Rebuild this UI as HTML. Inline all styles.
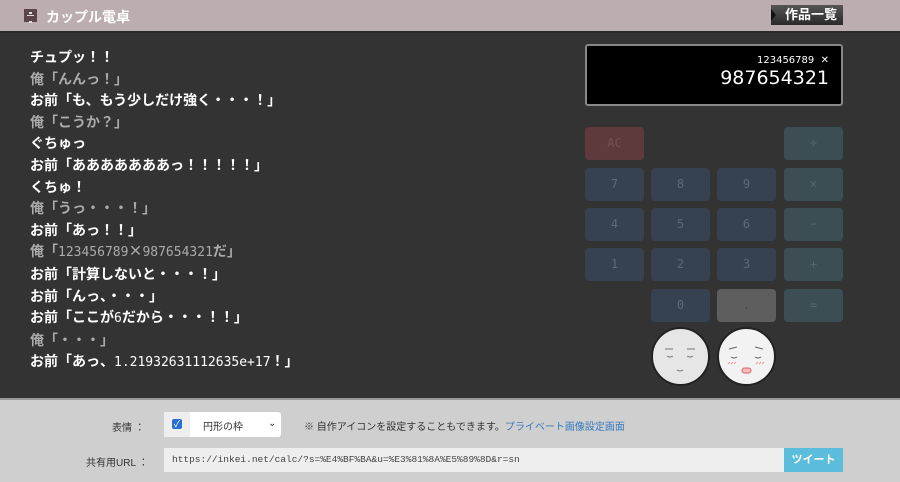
<!DOCTYPE html>
<html><head><meta charset="utf-8"><style>
*{margin:0;padding:0;box-sizing:border-box}
body{width:900px;height:482px;overflow:hidden;background:#333;font-family:"Liberation Sans","Noto Sans CJK JP",sans-serif;position:relative}
.hd{position:absolute;left:0;top:0;width:900px;height:33px;background:#bcaeb0;border-bottom:2px solid #2a2a2a}
.logo{position:absolute;left:24px;top:9px;width:13px;height:13px;background:#5a4548}
.logo:before{content:"";position:absolute;left:3px;top:6px;width:7px;height:1px;background:#ddd}
.logo:after{content:"";position:absolute;left:5px;top:3px;width:3px;height:7px;border-top:2px solid #ddd;border-bottom:2px solid #ddd}
.ttl{position:absolute;left:46px;top:7px;color:#fff;font-weight:bold;font-size:14px}
.btn1{position:absolute;left:771px;top:5px;width:72px;height:20px;background:linear-gradient(#555,#2a2a2a);color:#fff;font-weight:bold;font-size:13px;line-height:20px;padding-left:14px}
.btn1:before{content:"";position:absolute;left:0;top:4px;border-left:5px solid #111;border-top:6px solid transparent;border-bottom:6px solid transparent}
.lines{position:absolute;left:30px;top:47px;font-size:14px;font-weight:bold;line-height:21.6px;color:#fff;font-family:"DejaVu Sans Mono","Noto Sans CJK JP",monospace}
.lines div{font-family:"Noto Sans CJK JP",sans-serif}
.lines span.n{font-family:"DejaVu Sans Mono",monospace;font-size:13px;font-weight:normal}
.g{color:#aaa}
.disp{position:absolute;left:585px;top:44px;width:258px;height:62px;background:#000;border:2px solid #888;border-radius:3px;color:#fff;text-align:right;padding-right:12px;font-family:"DejaVu Sans",sans-serif}
.d1{font-size:10px;margin-top:9px}
.d2{font-size:19px;margin-top:1px;font-family:"DejaVu Sans",sans-serif}
.k{position:absolute;width:59px;height:33px;border-radius:4px;text-align:center;line-height:33px;font-size:12px;color:#5a6a7a;background:#36424f;font-family:"DejaVu Sans Mono",monospace}
.op{background:#3d4d54;color:#55666c}
.ac{background:#5e3a3c;color:#7a5052}
.dot{background:#5e5e5e;color:#444}
.face{position:absolute;top:327px;width:59px;height:59px;border-radius:50%;border:2px solid #222;background:#e6e6e6}
.bt{position:absolute;left:0;top:398px;width:900px;height:84px;background:#cfcfcf;border-top:2px solid #999}
.lb{position:absolute;font-size:10px;color:#333}
</style></head><body>
<div class="hd"><div class="logo"></div><div class="ttl">カップル電卓</div><div class="btn1">作品一覧</div></div>
<div class="lines">
<div>チュプッ！！</div>
<div class="g">俺「んんっ！」</div>
<div>お前「も、もう少しだけ強く・・・！」</div>
<div class="g">俺「こうか？」</div>
<div>ぐちゅっ</div>
<div>お前「あああああああっ！！！！！」</div>
<div>くちゅ！</div>
<div class="g">俺「うっ・・・！」</div>
<div>お前「あっ！！」</div>
<div class="g">俺「<span class="n">123456789</span>×<span class="n">987654321</span>だ」</div>
<div>お前「計算しないと・・・！」</div>
<div>お前「んっ、・・・」</div>
<div>お前「ここが<span class="n">6</span>だから・・・！！」</div>
<div class="g">俺「・・・」</div>
<div>お前「あっ、<span class="n">1.21932631112635e+17</span>！」</div>
</div>
<div class="disp"><div class="d1">123456789 &nbsp;✕</div><div class="d2">987654321</div></div>
<div class="k ac" style="left:585px;top:127px">AC</div>
<div class="k op" style="left:784px;top:127px">÷</div>
<div class="k" style="left:585px;top:168px">7</div><div class="k" style="left:651px;top:168px">8</div><div class="k" style="left:717px;top:168px">9</div><div class="k op" style="left:784px;top:168px">×</div>
<div class="k" style="left:585px;top:208px">4</div><div class="k" style="left:651px;top:208px">5</div><div class="k" style="left:717px;top:208px">6</div><div class="k op" style="left:784px;top:208px">−</div>
<div class="k" style="left:585px;top:248px">1</div><div class="k" style="left:651px;top:248px">2</div><div class="k" style="left:717px;top:248px">3</div><div class="k op" style="left:784px;top:248px">+</div>
<div class="k" style="left:651px;top:289px">0</div><div class="k dot" style="left:717px;top:289px">.</div><div class="k op" style="left:784px;top:289px">=</div>
<div class="face" style="left:651px"><svg width="55" height="55" viewBox="0 0 55 55" fill="none" stroke="#777" stroke-width="1"><path d="M12 20h8M34 20h8M14 27q3 2 6 0M34 27q3 2 6 0M24 41q3 2 6 0"/></svg></div>
<div class="face" style="left:717px;background:#f2f2f2"><svg width="55" height="55" viewBox="0 0 55 55" fill="none" stroke="#666" stroke-width="1"><path d="M10 20l8-2M36 18l8 2M12 28q3 2 6 0M36 28q3 2 6 0"/><path d="M9 35l2-2M12 35l2-2M15 35l2-2M37 35l2-2M40 35l2-2M43 35l2-2" stroke="#e99"/><rect x="23" y="39" width="9" height="5" rx="2.5" stroke="#c66" fill="#fbb"/></svg></div>
<div class="bt">
<div class="lb" style="left:112px;top:19px">表情 ：</div>
<div style="position:absolute;left:164px;top:12px;width:117px;height:25px;background:#fff;border-radius:3px"><div style="position:absolute;left:0;top:0;width:26px;height:25px;background:#eee"></div><div style="position:absolute;left:8px;top:7px;width:10px;height:10px;background:#2a6fd4;border-radius:2px;color:#fff;font-size:9px;line-height:10px;text-align:center">✓</div><div class="lb" style="left:39px;top:6px">円形の枠</div><div class="lb" style="left:104px;top:6px">⌄</div></div>
<div class="lb" style="left:304px;top:18px">※ 自作アイコンを設定することもできます。<span style="color:#3a7bbf">プライベート画像設定画面</span></div>
<div class="lb" style="left:86px;top:54px">共有用URL ：</div>
<div style="position:absolute;left:164px;top:48px;width:620px;height:24px;background:#eee;font-family:'Liberation Mono',monospace;font-size:9.5px;color:#444;line-height:24px;padding-left:8px">https://inkei.net/calc/?s=%E4%BF%BA&amp;u=%E3%81%8A%E5%89%8D&amp;r=sn</div>
<div style="position:absolute;left:784px;top:48px;width:59px;height:24px;background:#5bbcdc;color:#fff;font-size:11px;font-weight:bold;text-align:center;line-height:24px">ツイート</div>
</div>
</body></html>
